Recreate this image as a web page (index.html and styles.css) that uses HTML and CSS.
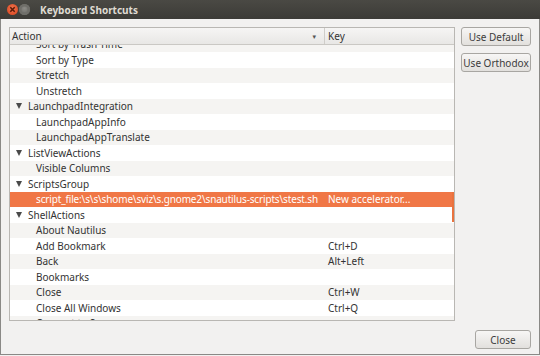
FILE: index.html
```html
<!DOCTYPE html>
<html lang="en">
<head>
    <meta charset="UTF-8">
    <title>Keyboard Shortcuts</title>
    <link rel="stylesheet" href="styles.css">
</head>
<body>
    <div class="window">
        <div class="titlebar">
            <span class="wm-btn wm-close">
                <svg viewBox="0 0 10 10"><path d="M3 3l4 4M7 3l-4 4"/></svg>
            </span>
            <span class="wm-btn wm-min"></span>
            <span class="title">Keyboard Shortcuts</span>
        </div>
        <div class="content">
            <div class="tree">
                <div class="tree-header">
                    <div class="col-action">Action <span class="sort-arrow">&#9662;</span></div>
                    <div class="col-key">Key</div>
                </div>
                <div class="tree-body">
                    <div class="rows">
                        <div class="row child"><span class="name">Sort by Trash Time</span><span class="key"></span></div>
                        <div class="row child"><span class="name">Sort by Type</span><span class="key"></span></div>
                        <div class="row child"><span class="name">Stretch</span><span class="key"></span></div>
                        <div class="row child"><span class="name">Unstretch</span><span class="key"></span></div>
                        <div class="row group"><span class="name">LaunchpadIntegration</span><span class="key"></span></div>
                        <div class="row child"><span class="name">LaunchpadAppInfo</span><span class="key"></span></div>
                        <div class="row child"><span class="name">LaunchpadAppTranslate</span><span class="key"></span></div>
                        <div class="row group"><span class="name">ListViewActions</span><span class="key"></span></div>
                        <div class="row child"><span class="name">Visible Columns</span><span class="key"></span></div>
                        <div class="row group"><span class="name">ScriptsGroup</span><span class="key"></span></div>
                        <div class="row child selected"><span class="name">script_file:\s\s\shome\sviz\s.gnome2\snautilus-scripts\stest.sh</span><span class="key">New accelerator...</span></div>
                        <div class="row group"><span class="name">ShellActions</span><span class="key"></span></div>
                        <div class="row child"><span class="name">About Nautilus</span><span class="key"></span></div>
                        <div class="row child"><span class="name">Add Bookmark</span><span class="key">Ctrl+D</span></div>
                        <div class="row child"><span class="name">Back</span><span class="key">Alt+Left</span></div>
                        <div class="row child"><span class="name">Bookmarks</span><span class="key"></span></div>
                        <div class="row child"><span class="name">Close</span><span class="key">Ctrl+W</span></div>
                        <div class="row child"><span class="name">Close All Windows</span><span class="key">Ctrl+Q</span></div>
                        <div class="row child"><span class="name">Connect to Server...</span><span class="key"></span></div>
                    </div>
                    <div class="scroll-hint"></div>
                </div>
            </div>
            <div class="side-buttons">
                <button>Use Default</button>
                <button>Use Orthodox</button>
            </div>
        </div>
        <div class="footer">
            <button class="close-btn">Close</button>
        </div>
    </div>
</body>
</html>
```

FILE: styles.css
```css
body {
    margin: 0;
    font-family: 'Noto Sans', 'DejaVu Sans', sans-serif;
    font-size: 10px;
    color: #333333;
    background: #f2f1f0;
}
.window {
    width: 540px;
    height: 355px;
    box-sizing: border-box;
    border: 1px solid #8a8986;
    border-top: none;
    background: #f2f1f0;
    display: flex;
    flex-direction: column;
}
.titlebar {
    height: 19px;
    flex-shrink: 0;
    margin: 0 -1px;
    background: linear-gradient(#4a4944, #3c3b37);
    display: flex;
    align-items: center;
    padding-left: 7px;
    gap: 1px;
}
.wm-btn {
    width: 11px;
    height: 11px;
    border-radius: 50%;
    display: flex;
}
.wm-close {
    background: radial-gradient(circle at 50% 40%, #f0764f, #d9401b);
}
.wm-close svg {
    width: 11px;
    height: 11px;
    stroke: #5a1a08;
    stroke-width: 1.4;
}
.wm-min {
    background: radial-gradient(circle at 50% 40%, #8c8b86, #5e5d59);
    box-shadow: inset 0 0 0 2.5px #6f6e69;
}
.title {
    margin-left: 9px;
    color: #dfdbd2;
    font-weight: bold;
    font-size: 10px;
}
.content {
    display: flex;
    padding: 8px 8px 0 8px;
    gap: 6px;
}
.tree {
    width: 446px;
    height: 294px;
    flex-shrink: 0;
    box-sizing: border-box;
    border: 1px solid #b9b7b3;
    background: #ffffff;
    display: flex;
    flex-direction: column;
}
.tree-header {
    height: 17px;
    flex-shrink: 0;
    display: flex;
    background: linear-gradient(#f6f5f4, #e8e7e5);
    border-bottom: 1px solid #cac8c4;
    box-sizing: border-box;
}
.col-action {
    width: 315px;
    border-right: 1px solid #cfcdc9;
    display: flex;
    align-items: center;
    justify-content: space-between;
    padding: 0 8px 0 2px;
    box-sizing: border-box;
}
.sort-arrow {
    font-size: 7px;
    color: #555;
}
.col-key {
    padding-left: 3px;
    display: flex;
    align-items: center;
}
.tree-body {
    flex: 1;
    overflow: hidden;
    position: relative;
}
.rows {
    margin-top: -8.5px;
}
.row {
    height: 15.5px;
    display: flex;
    align-items: center;
    white-space: nowrap;
}
.row:nth-child(odd) {
    background: #f5f4f2;
}
.row .name {
    width: 318px;
    flex-shrink: 0;
    box-sizing: border-box;
}
.row.child .name {
    padding-left: 26px;
}
.row.group .name {
    padding-left: 18px;
    position: relative;
}
.row.group .name::before {
    content: "";
    position: absolute;
    left: 6px;
    top: 4px;
    border-left: 3.5px solid transparent;
    border-right: 3.5px solid transparent;
    border-top: 6px solid #4a4a4a;
}
.row.selected {
    background: #f07746;
    color: #ffffff;
    margin-right: 2px;
}
.row.selected .name {
    letter-spacing: -0.15px;
}
.scroll-hint {
    position: absolute;
    right: 0;
    top: 147px;
    width: 2px;
    height: 30px;
    background: #e9733f;
}
.side-buttons {
    display: flex;
    flex-direction: column;
    gap: 7px;
}
button {
    font-family: inherit;
    font-size: 10px;
    color: #3c3c3c;
    height: 19px;
    width: 70px;
    padding: 0;
    white-space: nowrap;
    border: 1px solid #a8a6a2;
    border-radius: 3px;
    background: linear-gradient(#f7f6f5, #e2e0dd);
}
.footer {
    display: flex;
    justify-content: flex-end;
    padding: 9px 8px 0 0;
}
.close-btn {
    width: 56px;
}
```
